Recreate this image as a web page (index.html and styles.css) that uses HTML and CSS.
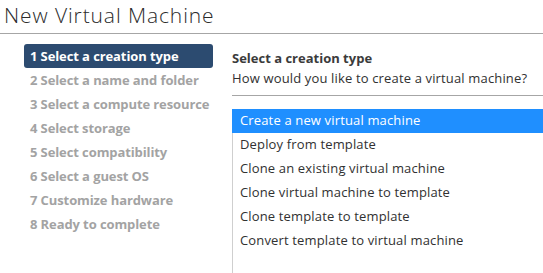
FILE: index.html
```html
<!DOCTYPE html>
<html lang="en">
<head>
    <meta charset="UTF-8">
    <title>New Virtual Machine</title>
    <link rel="stylesheet" href="styles.css">
</head>
<body>
    <!--title-->
    <h1 class="mtit">New Virtual Machine</h1>

    <div class="wizard">
        <!--steps-->
        <nav class="steps">
            <ul>
                <li class="on">1 Select a creation type</li>
                <li>2 Select a name and folder</li>
                <li>3 Select a compute resource</li>
                <li>4 Select storage</li>
                <li>5 Select compatibility</li>
                <li>6 Select a guest OS</li>
                <li>7 Customize hardware</li>
                <li>8 Ready to complete</li>
            </ul>
        </nav>

        <!--page-->
        <section class="page">
            <h2 class="ptit">Select a creation type</h2>
            <p class="pdesc">How would you like to create a virtual machine?</p>
            <ul class="types">
                <li class="on">Create a new virtual machine</li>
                <li>Deploy from template</li>
                <li>Clone an existing virtual machine</li>
                <li>Clone virtual machine to template</li>
                <li>Clone template to template</li>
                <li>Convert template to virtual machine</li>
            </ul>
        </section>
    </div>
</body>
</html>
```

FILE: styles.css
```css
html,
body,
ul,
h1,
h2,
p {
    margin: 0;
    padding: 0;
}

body {
    height: 273px;
    background-color: #fff;
    font-family: "Open Sans", "Liberation Sans", sans-serif;
    font-size: 13px;
    color: #313131;
    overflow: hidden;
}

ul {
    list-style: none;
}

/*title*/
.mtit {
    height: 33px;
    padding-left: 4px;
    font-size: 21px;
    font-weight: 300;
    letter-spacing: .9px;
    line-height: 30px;
    color: #2b2b2b;
    border-bottom: 1px solid #a6a6a6;
}

/*wizard*/
.wizard {
    display: flex;
    padding-top: 10px;
}

/*steps*/
.steps {
    width: 189px;
    margin-left: 24px;
}

.steps li {
    height: 24px;
    padding-left: 6px;
    line-height: 24px;
    font-weight: 700;
    letter-spacing: -.1px;
    color: #a3a3a3;
    white-space: nowrap;
}

.steps li.on {
    background-color: #2c4b70;
    border-radius: 3px;
    color: #fff;
}

/*page*/
.page {
    flex: 1;
    margin-left: 19px;
    padding-top: 5px;
    letter-spacing: .15px;
}

.ptit {
    font-size: 13px;
    font-weight: 700;
    letter-spacing: 0;
    line-height: 18px;
    color: #3b3b3b;
}

.pdesc {
    height: 28px;
    line-height: 22px;
    border-bottom: 1px solid #a6a6a6;
}

.types {
    margin-top: 13px;
    height: 164px;
    border-left: 1px solid #cfcfcf;
}

.types li {
    height: 24px;
    padding-left: 7px;
    line-height: 23px;
    white-space: nowrap;
}

.types li.on {
    margin-left: -1px;
    padding-left: 8px;
    background-color: #1f8fff;
    color: #fff;
}
```
